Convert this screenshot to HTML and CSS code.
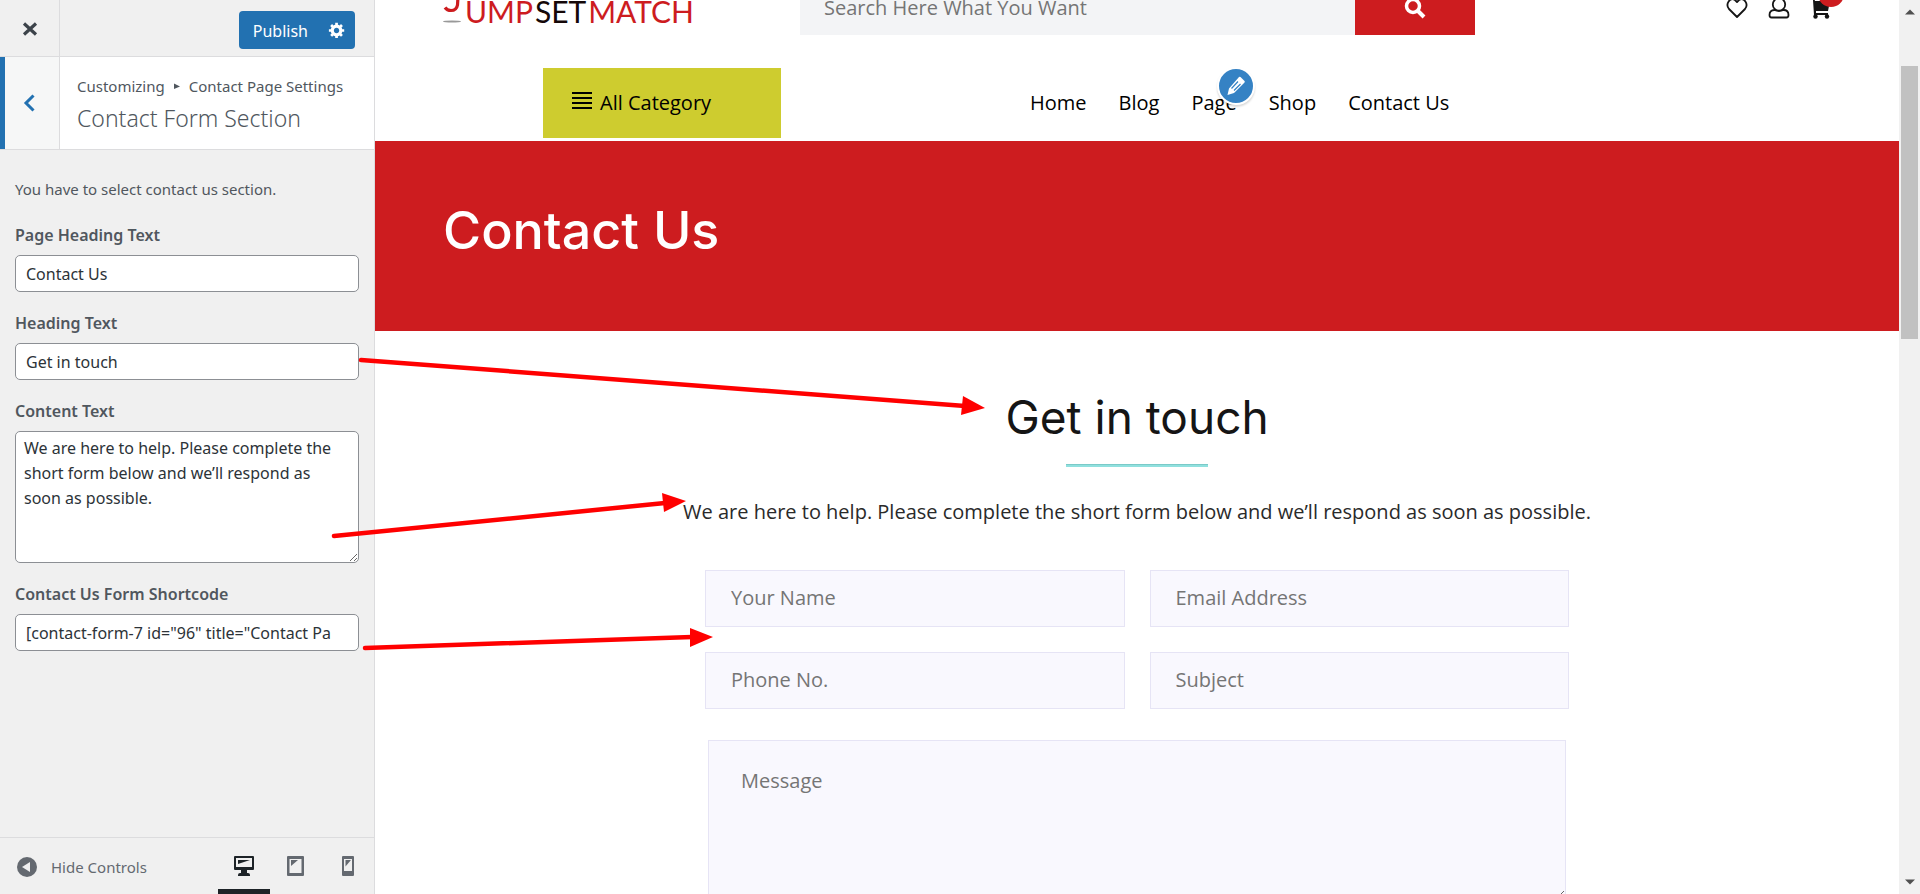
FILE: index.html
```html
<!DOCTYPE html>
<html lang="en">
<head>
<meta charset="utf-8">
<meta name="viewport" content="width=device-width, initial-scale=1">
<title>Customize: Contact Form Section</title>
<link rel="stylesheet" href="styles.css">
</head>
<body>
<div class="customizer">
  <aside class="sidebar">
    <div class="topbar">
      <button class="close" type="button" aria-label="Close">
        <svg width="16" height="16" viewBox="0 0 16 16"><path d="M2 2.500L14 13.500M14 2.500L2 13.500" stroke="#3c434a" stroke-width="3.200" fill="none"/></svg>
      </button>
      <div class="publish-group">
        <button class="publish" type="button">Publish</button>
        <button class="gear" type="button" aria-label="Publish settings">
          <svg width="20" height="20" viewBox="0 0 20 20"><path fill="#fff" d="M18 12h-2.180c-.17.700-.44 1.350-.81 1.930l1.540 1.540-2.100 2.100-1.540-1.540c-.58.360-1.230.630-1.910.790V19H8v-2.180c-.68-.16-1.330-.43-1.910-.79l-1.540 1.540-2.120-2.120 1.540-1.540c-.36-.58-.63-1.230-.79-1.910H1V9.030h2.170c.16-.7.440-1.350.8-1.940L2.430 5.550l2.100-2.100 1.540 1.540c.58-.37 1.240-.64 1.930-.81V2h3v2.180c.68.160 1.330.430 1.910.790l1.540-1.540 2.120 2.120-1.540 1.540c.36.590.64 1.240.8 1.940H18V12zm-8.500 1.500c1.660 0 3-1.340 3-3s-1.340-3-3-3-3 1.340-3 3 1.340 3 3 3z"/></svg>
        </button>
      </div>
    </div>
    <div class="section-title">
      <button class="back" type="button" aria-label="Back">
        <svg width="12" height="18" viewBox="0 0 12 18"><path d="M10.500 1.500L3 9l7.500 7.500" stroke="#2271b1" stroke-width="3" fill="none"/></svg>
      </button>
      <div class="titles">
        <p class="crumb">Customizing <svg width="8" height="8" viewBox="0 0 8 8"><path d="M1 1.500L7 4.500 1 7z" fill="#50575e"/></svg> Contact Page Settings</p>
        <h1 class="section-name">Contact Form Section</h1>
      </div>
    </div>
    <div class="controls">
      <p class="description">You have to select contact us section.</p>
      <div class="field"><label for="page-heading">Page Heading Text</label><input id="page-heading" type="text" value="Contact Us"></div>
      <div class="field"><label for="heading">Heading Text</label><input id="heading" type="text" value="Get in touch"></div>
      <div class="field"><label for="content">Content Text</label><textarea id="content">We are here to help. Please complete the short form below and we’ll respond as soon as possible.</textarea></div>
      <div class="field"><label for="shortcode">Contact Us Form Shortcode</label><input id="shortcode" type="text" value="[contact-form-7 id=&quot;96&quot; title=&quot;Contact Pa"></div>
    </div>
    <div class="footer">
      <button class="hide" type="button">
        <svg width="20" height="20" viewBox="0 0 20 20"><circle cx="10" cy="10" r="10" fill="#646970"/><path d="M13 5v10L5 10z" fill="#f0f0f1"/></svg>
        Hide Controls
      </button>
      <div class="devices">
        <button class="device active" type="button" aria-label="Desktop preview">
          <svg width="22" height="22" viewBox="0 0 22 22"><path fill="#1d2327" fill-rule="evenodd" d="M2 1h18q1 0 1 1v12q0 1-1 1h-6v3h1q2 0 2 2v1H5v-1q0-2 2-2h1v-3H2q-1 0-1-1V2q0-1 1-1zM3 3v9h16V3z"/><path d="M5 5h12L5 9z" fill="#1d2327"/></svg>
        </button>
        <button class="device" type="button" aria-label="Tablet preview">
          <svg width="20" height="22" viewBox="0 0 20 22"><path fill="#646970" fill-rule="evenodd" d="M2 1h15q1 0 1 1v18q0 1-1 1H2q-1 0-1-1V2q0-1 1-1zM3.500 4v14h12V4z"/><path d="M5 5h7l-7 6z" fill="#646970"/></svg>
        </button>
        <button class="device" type="button" aria-label="Mobile preview">
          <svg width="14" height="22" viewBox="0 0 14 22"><path fill="#646970" fill-rule="evenodd" d="M2 1h10q1 0 1 1v18q0 1-1 1H2q-1 0-1-1V2q0-1 1-1zM3 4v12h8V4z"/><path d="M4.500 5H10l-5.500 6.500z" fill="#646970"/></svg>
        </button>
      </div>
    </div>
  </aside>

  <main class="preview">
    <div class="site">
      <header class="masthead">
        <a class="logo" href="#" aria-label="Jump Set Match">
          <svg width="22" height="43" viewBox="0 0 22 43"><path d="M8 8h7.500l-1 17q-1 5.500-6.500 5.500-4 0-6-3" fill="none" stroke="#cd1c1f" stroke-width="3.200"/><ellipse cx="9" cy="41.500" rx="9" ry="1" fill="#999"/></svg>
          <span class="logo-text">UMP<b>SET</b>MATCH</span>
        </a>
        <form class="search">
          <input type="search" aria-label="Search" placeholder="Search Here What You Want">
          <button type="button" aria-label="Search">
            <svg width="22" height="22" viewBox="0 0 22 22"><circle cx="9" cy="9" r="6.500" fill="none" stroke="#fff" stroke-width="3.500"/><path d="M14 14l6 6" stroke="#fff" stroke-width="4"/></svg>
          </button>
        </form>
        <div class="account">
          <a href="#" aria-label="Wishlist"><svg width="22" height="22" viewBox="0 0 22 22"><path d="M11 20L3 12C-1 7 4 0 9 3l2 2 2-2c5-3 10 4 6 9z" fill="none" stroke="#151515" stroke-width="1.800" stroke-linejoin="round"/></svg></a>
          <a href="#" aria-label="Account"><svg width="22" height="22" viewBox="0 0 22 22"><circle cx="11" cy="7.500" r="6.200" fill="none" stroke="#151515" stroke-width="1.800"/><path d="M6.500 13C3 13 1.500 15 1.500 18q0 2.500 2 2.500h15q2 0 2-2.500c0-3-1.500-5-5-5q-4.500 2-9 0z" fill="#fff" stroke="#151515" stroke-width="1.800"/></svg></a>
          <a class="cart" href="#" aria-label="Cart"><svg width="22" height="22" viewBox="0 0 22 22"><path d="M1 1h3l1 3h15l-2 10H6v2h12v2H4L3 3H1z" fill="#151515"/><circle cx="5.500" cy="19.500" r="2.200" fill="#151515"/><circle cx="17" cy="19.500" r="2.200" fill="#151515"/></svg><span class="badge"></span></a>
        </div>
      </header>
      <div class="menu-row">
        <button class="category" type="button">
          <svg width="20" height="20" viewBox="0 0 20 20"><path d="M0 1h20M0 6h20M0 11h20M0 16h20" stroke="#000" stroke-width="2"/></svg>
          All Category
        </button>
        <nav class="menu">
          <a href="#">Home</a>
          <a href="#">Blog</a>
          <a class="edit-anchor" href="#">Page<span class="edit"><svg width="20" height="20" viewBox="0 0 20 20"><path fill="#fff" d="M14.500 1l4 4q.7.700 0 1.400L8 17l-6.500 2L3 12.500 13 1q.8-.7 1.500 0z"/><path d="M5.500 12.500L12 5.500M8 14.500L14.500 8" stroke="#3582c4" stroke-width="1.200"/></svg></span></a>
          <a href="#">Shop</a>
          <a href="#">Contact Us</a>
        </nav>
      </div>
      <section class="banner"><h2>Contact Us</h2></section>
      <section class="contact">
        <h3>Get in touch</h3>
        <hr>
        <p>We are here to help. Please complete the short form below and we’ll respond as soon as possible.</p>
        <form class="contact-form">
          <input type="text" aria-label="Your Name" placeholder="Your Name">
          <input type="email" aria-label="Email Address" placeholder="Email Address">
          <input type="tel" aria-label="Phone No." placeholder="Phone No.">
          <input type="text" aria-label="Subject" placeholder="Subject">
          <textarea aria-label="Message" placeholder="Message"></textarea>
        </form>
      </section>
    </div>
    <div class="scrollbar">
      <svg width="10" height="6" viewBox="0 0 10 6"><path d="M0 5.500L5 .5l5 5z" fill="#505050"/></svg>
      <div class="track"><div class="thumb"></div></div>
      <svg width="10" height="6" viewBox="0 0 10 6"><path d="M0 .5l5 5 5-5z" fill="#505050"/></svg>
    </div>
  </main>

  <svg class="arrows" width="1000" height="660" viewBox="0 0 1000 660">
    <g stroke="#f00" stroke-width="4.500" stroke-linecap="round">
      <path d="M361 360L965 406"/><path d="M334 536L665 503"/><path d="M365 648L692 637"/>
    </g>
    <g fill="#f00"><path d="M985 408l-22-12-2 19z"/><path d="M686 501l-24-8 2 19z"/><path d="M713 637l-23-9v19z"/></g>
  </svg>
</div>
</body>
</html>
```
FILE: styles.css
```css
* { box-sizing: border-box; }
body { margin: 0; font-family: "Open Sans", "Noto Sans", sans-serif; color: #50575e; }
h1, h2, h3, p { margin: 0; font-weight: 400; }
button, input, textarea { font: inherit; color: inherit; border: 0; border-radius: 0; margin: 0; outline: 0; }
button { background: none; padding: 0; display: flex; align-items: center; justify-content: center; }
a { color: inherit; text-decoration: none; }
svg { display: block; flex: none; }

.customizer { position: relative; display: flex; height: 100vh; overflow: hidden; }

.sidebar { flex: 0 0 375px; display: flex; flex-direction: column; background: #f0f0f0; border-right: 1px solid #dcdcde; font-family: "Noto Sans", "Open Sans", sans-serif; }
.topbar { display: flex; justify-content: space-between; height: 57px; border-bottom: 1px solid #dcdcde; }
.close { width: 60px; padding-top: 2px; border-right: 1px solid #dcdcde; }
.publish-group { display: flex; margin: 11px 19px 7px 0; border-radius: 4px; background: #2271b1; color: #fff; }
.publish { padding: 2px 10px 0 14px; font-size: 16px; }
.gear { width: 37px; }
.gear svg { width: 18px; }

.section-title { display: flex; height: 93px; background: #fff; border-bottom: 1px solid #dcdcde; }
.back { width: 60px; padding-right: 6px; background: #f6f7f7; border-left: 5px solid #2271b1; border-right: 1px solid #dcdcde; }
.titles { padding: 17px 0 0 17px; }
.crumb { display: flex; align-items: center; gap: 8px; font-size: 15px; line-height: 24px; white-space: nowrap; }
.section-name { font-size: 23px; line-height: 40px; font-weight: 300; }

.controls { flex: 1; padding: 27px 15px 0; }
.description { margin-bottom: 21px; font-size: 15px; line-height: 24px; }
.field { margin-bottom: 18px; }
.field label { display: block; margin-bottom: 7px; font-size: 16px; line-height: 26px; font-weight: 600; }
.field input, .field textarea { display: block; width: 100%; border: 1px solid #8c8f94; border-radius: 5px; background: #fff; color: #2c3338; font-size: 16px; }
.field input { height: 37px; padding: 1px 10px 0; }
.field textarea { height: 132px; padding: 4px 8px; line-height: 25px; }

.footer { display: flex; justify-content: space-between; height: 57px; border-top: 1px solid #dcdcde; }
.hide { gap: 14px; padding: 2px 0 0 17px; font-size: 15px; color: #646970; }
.devices { display: flex; }
.device { width: 52px; padding-top: 5px; border-bottom: 5px solid transparent; }
.device.active { border-color: #1d2327; }

.preview { flex: 1; min-width: 0; display: flex; background: #fff; color: #151515; font-size: 20px; }
.site { flex: 1; min-width: 0; }
.masthead { display: flex; align-items: center; height: 55px; margin-top: -20px; padding: 0 67px 0 68px; }
.logo { display: flex; align-items: flex-end; align-self: flex-end; margin-bottom: 12px; }
.logo-text { font-family: Lato, sans-serif; font-size: 30px; line-height: 23px; color: #cd1c1f; }
.logo-text b { margin: 0 2px; font-weight: 400; color: #150808; }
.search { display: flex; flex: 0 1 675px; height: 55px; margin-left: 106px; margin-right: auto; }
.search input { flex: 1; min-width: 0; padding: 0 24px; background: #f3f4f6; }
.search button { width: 120px; background: #cd1c1f; }
::placeholder { color: #757575; opacity: 1; }
.account { display: flex; gap: 20px; }
.cart { position: relative; }
.badge { position: absolute; right: -12px; top: -16px; width: 26px; height: 26px; border-radius: 50%; background: #cd1c1f; }

.menu-row { display: flex; align-items: center; height: 106px; padding: 30px 0 0 168px; }
.category { width: 238px; height: 70px; padding: 0 0 2px 29px; gap: 8px; justify-content: flex-start; background: #cecc2f; color: #000; }
.menu { display: flex; gap: 32px; margin-left: 249px; padding-bottom: 2px; color: #000; }
.edit-anchor { position: relative; }
.edit { position: absolute; right: -18px; top: -22px; width: 38px; height: 38px; display: flex; align-items: center; justify-content: center; border: 2px solid #fff; border-radius: 50%; background: #3582c4; box-shadow: 0 2px 2px rgba(0, 0, 0, .15); }

.banner { display: flex; align-items: center; height: 190px; padding: 0 68px 10px; background: #cd1c1f; color: #fff; }
.banner h2 { font: 500 52px/60px Inter, sans-serif; }

.contact { display: flex; flex-direction: column; align-items: center; padding-top: 56px; }
.contact h3 { font: 400 46px/60px Inter, sans-serif; }
.contact hr { width: 142px; height: 3px; margin: 17px 0 29px; border: 0; border-top: 1px solid #7bcac8; background: #90e0de; }
.contact p { line-height: 32px; color: #2a2a2a; }
.contact-form { width: 864px; display: grid; grid-template-columns: 1fr 1fr; gap: 25px; margin-top: 42px; }
.contact-form input, .contact-form textarea { min-width: 0; border: 1px solid #e6e4f5; background: #f9f8fe; }
.contact-form input { height: 57px; padding: 0 25px 2px; }
.contact-form textarea { grid-column: 1 / -1; height: 160px; margin: 6px 3px 0; padding: 26px 32px; }

.scrollbar { flex: 0 0 21px; display: flex; flex-direction: column; align-items: center; padding: 9px 0; background: #f1f1f1; }
.track { flex: 1; width: 17px; padding: 51px 0; }
.thumb { height: 273px; background: #c1c1c1; }

.arrows { position: absolute; left: 0; top: 0; pointer-events: none; }
```
